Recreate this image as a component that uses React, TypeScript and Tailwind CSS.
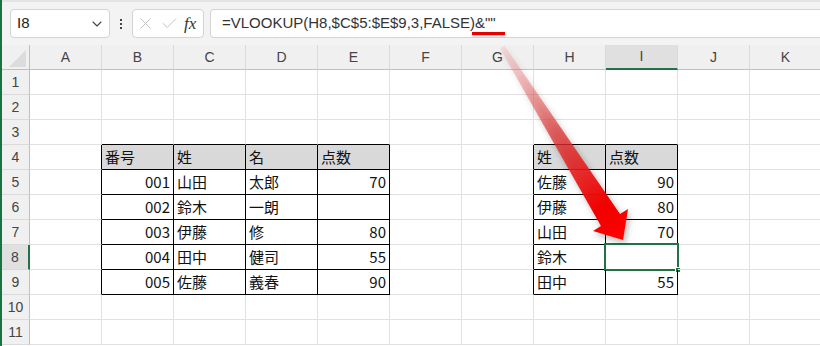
import { Check, ChevronDown, X } from "lucide-react";

const COLS = ["A", "B", "C", "D", "E", "F", "G", "H", "I", "J", "K"];
const ROWS = [1, 2, 3, 4, 5, 6, 7, 8, 9, 10, 11];

// sheet content keyed by "row:col"
const DATA: Record<string, { t: string; right?: boolean }> = {
  "4:1": { t: "番号" },
  "4:2": { t: "姓" },
  "4:3": { t: "名" },
  "4:4": { t: "点数" },
  "5:1": { t: "001", right: true },
  "5:2": { t: "山田" },
  "5:3": { t: "太郎" },
  "5:4": { t: "70", right: true },
  "6:1": { t: "002", right: true },
  "6:2": { t: "鈴木" },
  "6:3": { t: "一朗" },
  "7:1": { t: "003", right: true },
  "7:2": { t: "伊藤" },
  "7:3": { t: "修" },
  "7:4": { t: "80", right: true },
  "8:1": { t: "004", right: true },
  "8:2": { t: "田中" },
  "8:3": { t: "健司" },
  "8:4": { t: "55", right: true },
  "9:1": { t: "005", right: true },
  "9:2": { t: "佐藤" },
  "9:3": { t: "義春" },
  "9:4": { t: "90", right: true },
  "4:7": { t: "姓" },
  "4:8": { t: "点数" },
  "5:7": { t: "佐藤" },
  "5:8": { t: "90", right: true },
  "6:7": { t: "伊藤" },
  "6:8": { t: "80", right: true },
  "7:7": { t: "山田" },
  "7:8": { t: "70", right: true },
  "8:7": { t: "鈴木" },
  "9:7": { t: "田中" },
  "9:8": { t: "55", right: true },
};

const inTable = (r: number, c: number) =>
  r >= 4 && r <= 9 && ((c >= 1 && c <= 4) || (c >= 7 && c <= 8));

function Cell({ r, c }: { r: number; c: number }) {
  const rightBlack = inTable(r, c) || inTable(r, c + 1);
  const bottomBlack = inTable(r, c) || inTable(r + 1, c);
  const d = DATA[`${r}:${c}`];
  const selected = r === 8 && c === 8;
  return (
    <div
      className={`relative flex h-[25px] w-[72px] shrink-0 items-center border-r border-b px-[3px] pt-[1px] text-[15px] text-[#111] ${
        rightBlack ? "border-r-black" : "border-r-[#e1e1e1]"
      } ${bottomBlack ? "border-b-black" : "border-b-[#e1e1e1]"} ${
        r === 4 && inTable(r, c) ? "bg-[#d9d9d9]" : ""
      } ${d?.right ? "justify-end" : "justify-start"}`}
    >
      {d?.t}
      {selected && (
        <div className="pointer-events-none absolute -top-[2px] -left-[2px] h-[28px] w-[75px] border-2 border-[#217346]">
          <div className="absolute -right-[4px] -bottom-[4px] h-[6px] w-[6px] border border-white bg-[#217346]" />
        </div>
      )}
    </div>
  );
}

export default function App() {
  return (
    <div
      className="relative h-[346px] w-[820px] overflow-hidden bg-white"
      style={{ fontFamily: '"Noto Sans CJK JP", "Liberation Sans", sans-serif' }}
    >
      <div className="flex h-full flex-col border-l-2 border-[#1a7343]">
        {/* formula bar */}
        <div className="flex h-[45px] shrink-0 items-start gap-0 border-t-2 border-[#e4e4e4] bg-[#f3f3f3] pt-[7px] pl-[8px] font-['Liberation_Sans',sans-serif]">
          <div className="flex h-[29px] w-[100px] items-center justify-between rounded-[4px] border border-[#d4d4d4] bg-white pr-[4px] pl-[6px] text-[15px] text-[#222]">
            <span>I8</span>
            <ChevronDown size={16} strokeWidth={1.6} className="text-[#444]" />
          </div>
          <div className="flex h-[29px] w-[22px] flex-col items-center justify-center gap-[2px]">
            <span className="h-[2px] w-[2px] bg-[#444]" />
            <span className="h-[2px] w-[2px] bg-[#444]" />
            <span className="h-[2px] w-[2px] bg-[#444]" />
          </div>
          <div className="flex h-[29px] w-[72px] items-center rounded-[4px] border border-[#d4d4d4] bg-white pl-[3px] text-[#b8b8b8]">
            <X size={19} strokeWidth={1.1} />
            <Check size={19} strokeWidth={1.1} className="ml-[5px]" />
            <span className="ml-[5px] font-['Liberation_Serif',serif] text-[17px] text-[#333] italic">
              fx
            </span>
          </div>
          <div className="ml-[6px] flex h-[29px] flex-1 items-center rounded-l-[4px] border border-r-0 border-[#d4d4d4] bg-white pl-[11px] text-[15px] text-[#333]">
            =VLOOKUP(H8,$C$5:$E$9,3,FALSE)&amp;""
          </div>
        </div>

        {/* column headers */}
        <div className="flex h-[25px] shrink-0 bg-[#f0f0f0] font-['Liberation_Sans',sans-serif] text-[14px] text-[#444]">
          <div className="relative h-[25px] w-[28px] shrink-0 border-r border-b border-[#bfbfbf]">
            <svg className="absolute top-[5px] left-[7px]" width="17" height="17" viewBox="0 0 17 17">
              <polygon points="17,0 17,17 0,17" fill="#dcdcdc" />
            </svg>
          </div>
          {COLS.map((l, i) => (
            <div
              key={l}
              className={`flex h-[25px] w-[72px] shrink-0 items-center justify-center border-r border-r-[#dadada] ${
                i === 8 ? "border-b-2 border-b-[#217346] bg-[#e0e0e0]" : "border-b border-b-[#bfbfbf]"
              }`}
            >
              {l}
            </div>
          ))}
        </div>

        {/* rows */}
        {ROWS.map((r) => (
          <div key={r} className="flex h-[25px] shrink-0">
            <div
              className={`flex h-[25px] w-[28px] shrink-0 items-center justify-center border-b border-b-[#dadada] font-['Liberation_Sans',sans-serif] text-[14px] text-[#444] ${
                r === 8 ? "border-r-2 border-r-[#217346] bg-[#e0e0e0]" : "border-r border-r-[#bfbfbf] bg-[#f0f0f0]"
              }`}
            >
              {r}
            </div>
            {COLS.map((_, c) => (
              <Cell key={c} r={r} c={c} />
            ))}
          </div>
        ))}
      </div>

      {/* annotation: underline + arrow */}
      <div className="absolute top-[32px] left-[472px] h-[3px] w-[33px] bg-[#e60000] shadow-[0_1px_2px_rgba(0,0,0,0.25)]" />
      <svg
        className="pointer-events-none absolute top-0 left-0"
        width="820"
        height="346"
        viewBox="0 0 820 346"
        style={{ filter: "drop-shadow(2px 3px 3px rgba(0,0,0,0.3))" }}
      >
        <defs>
          <linearGradient id="arw" x1="502" y1="47" x2="620" y2="235" gradientUnits="userSpaceOnUse">
            <stop offset="0" stopColor="#ff8a8a" stopOpacity="0.2" />
            <stop offset="0.45" stopColor="#e03535" stopOpacity="0.75" />
            <stop offset="0.85" stopColor="#f20000" stopOpacity="1" />
            <stop offset="1" stopColor="#ff0000" />
          </linearGradient>
        </defs>
        <polygon
          points="504.5,45.5 620,214 628,209 623,240 593,231 601,226 500,48.5"
          fill="url(#arw)"
        />
      </svg>
    </div>
  );
}
